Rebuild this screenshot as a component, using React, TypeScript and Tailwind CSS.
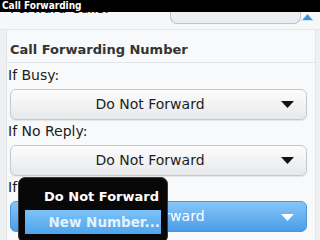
import React from 'react';

const font = { fontFamily: '"DejaVu Sans", "Liberation Sans", sans-serif' };

const DownArrow = ({ className }: { className: string }) => (
    <svg className={className} width="13" height="7" viewBox="0 0 13 7">
        <path d="M0 0 H13 L6.5 7 Z" fill="currentColor" />
    </svg>
);

const Picker = ({ value, active }: { value: string; active?: boolean }) => (
    <div
        className={
            active
                ? 'relative ml-[3px] w-[297px] h-[31px] rounded-[6px] border border-[#4b97d6] bg-gradient-to-b from-[#86c6f8] to-[#4a9de8] flex items-center'
                : 'relative ml-[3px] w-[297px] h-[31px] rounded-[6px] border border-[#c4c8cb] bg-gradient-to-b from-[#fdfdfd] to-[#e6e8ea] shadow-[0_1px_1px_rgba(0,0,0,0.08)] flex items-center'
        }
    >
        <span
            className={
                active
                    ? 'w-[278px] text-center text-[14px] leading-[17px] text-white'
                    : 'w-[278px] text-center text-[14px] leading-[17px] text-[#1e1e1e]'
            }
        >
            {value}
        </span>
        <DownArrow
            className={active ? 'absolute left-[270px] top-[12px] text-white' : 'absolute left-[270px] top-[11px] text-[#111]'}
        />
    </div>
);

const Label = ({ text, mt }: { text: string; mt: string }) => (
    <div className={`${mt} pl-[1px] h-[17px] text-[14px] leading-[17px] text-[#1c1c1c]`}>{text}</div>
);

export default function App() {
    return (
        <div className="relative w-[320px] h-[240px] overflow-hidden bg-[#edf1f4]" style={font}>
            {/* title bar */}
            <div
                className="h-[12px] bg-black pl-[2px] text-white text-[10px] font-bold leading-[12px] relative z-10"
                style={{ fontFamily: '"DejaVu Sans Condensed", "DejaVu Sans", sans-serif', fontStretch: 'condensed' }}
            >
                Call Forwarding
            </div>

            <div className="h-[228px] overflow-hidden">
                <div className="-mt-[16px]">
                    {/* scrolled row */}
                    <div className="h-[34px] border-b border-[#e4e7e9] bg-[#f6f7f8] flex">
                        <div className="pl-[10px] w-[170px] text-[14px] leading-[24px] text-[#1c1c1c]">Forward Calls:</div>
                        <div className="w-[131px] h-[28px] rounded-b-[7px] border border-t-0 border-[#bcc3c9] bg-gradient-to-b from-[#f4f7f9] to-[#e7ecf0] pl-[10px] text-center text-[13px] leading-[24px] text-[#1c1c1c]">
                            Customized
                        </div>
                    </div>

                    {/* section card */}
                    <div className="ml-[6px] w-[310px] h-[220px] border-x border-[#e1e5e8] bg-[#f8f9fa]">
                        <div className="pt-[12px] pb-[4px] pl-[3px] border-b border-[#e3e6e8] text-[13px] font-bold leading-[16px] text-[#333]">
                            Call Forwarding Number
                        </div>
                        <Label text="If Busy:" mt="mt-[4px]" />
                        <div className="mt-[5px]">
                            <Picker value="Do Not Forward" />
                        </div>
                        <Label text="If No Reply:" mt="mt-[3px]" />
                        <div className="mt-[5px]">
                            <Picker value="Do Not Forward" />
                        </div>
                        <Label text="If Unreachable:" mt="mt-[3px]" />
                        <div className="mt-[5px]">
                            <Picker value="Do Not Forward" active />
                        </div>
                    </div>
                </div>
            </div>

            {/* scroll up indicator */}
            <svg className="absolute left-[301px] top-[13px]" width="13" height="8" viewBox="0 0 13 8">
                <path d="M0.5 7.5 L6.5 0.8 L12.5 7.5 Z" fill="#3b8fd2" stroke="#cfe6f7" strokeWidth="1" />
            </svg>

            {/* open menu */}
            <div className="absolute left-[18px] top-[177px] w-[150px] h-[66px] rounded-[7px] border border-[#3a3a3a] bg-[#080808] px-[6px] pt-[6px]">
                <div className="h-[26px] pr-[2px] text-right text-[13px] font-bold leading-[26px] text-white">
                    Do Not Forward
                </div>
                <div className="h-[24px] overflow-hidden pr-[1px] text-right text-[13.5px] font-bold leading-[24px] text-[#e4f2ff] bg-gradient-to-b from-[#7cc2f7] to-[#4ea4ec] whitespace-nowrap">
                    New Number...
                </div>
            </div>
        </div>
    );
}
